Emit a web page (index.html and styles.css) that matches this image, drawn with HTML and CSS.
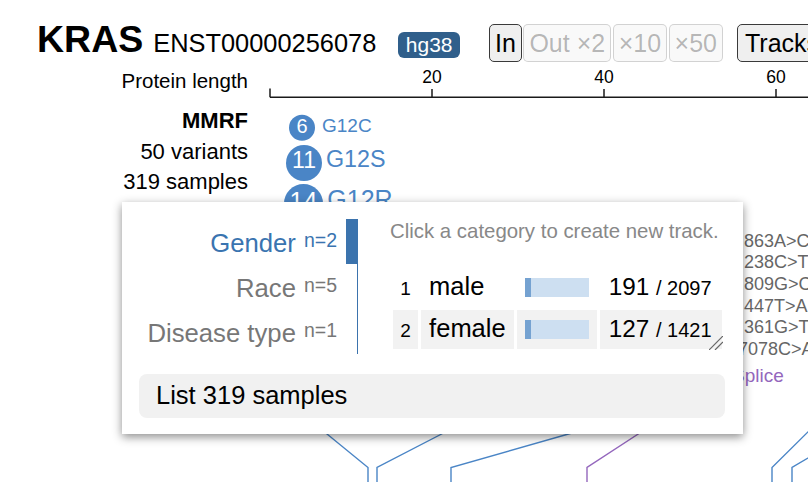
FILE: index.html
```html
<!DOCTYPE html>
<html lang="en">
<head>
<meta charset="utf-8">
<title>KRAS lollipop</title>
<link rel="stylesheet" href="styles.css">
</head>
<body>
<header class="top">
  <span class="gene">KRAS</span>
  <span class="isoform">ENST00000256078</span>
  <span class="genome">hg38</span>
  <div class="zoom">
    <button class="btn">In</button>
    <button class="btn" disabled>Out ×2</button>
    <button class="btn" disabled>×10</button>
    <button class="btn" disabled>×50</button>
  </div>
  <button class="btn tracks">Tracks</button>
</header>
<main class="track">
  <div class="labels">
    <div class="axis-label">Protein length</div>
    <div class="ds">
      <div class="ds-name">MMRF</div>
      <div>50 variants</div>
      <div>319 samples</div>
    </div>
  </div>
  <svg class="canvas" width="548" height="416" viewBox="0 0 548 416">
    <g class="axis">
      <line x1="10" y1="31.25" x2="548" y2="31.25"/>
      <line x1="10" y1="22.5" x2="10" y2="31.25"/>
      <line x1="172" y1="23" x2="172" y2="31.25"/>
      <line x1="344" y1="23" x2="344" y2="31.25"/>
      <line x1="516" y1="23" x2="516" y2="31.25"/>
      <text x="172" y="17">20</text>
      <text x="344" y="17">40</text>
      <text x="516" y="17">60</text>
    </g>
    <g class="stems">
      <polyline points="56,359 108,401.5 108,420"/>
      <polyline points="199,359 117,401.5 117,420"/>
      <polyline points="340,359 191,401.5 191,420"/>
      <polyline class="splice" points="392,359 327,401.5 327,420"/>
      <polyline points="560,354 512,401.5 512,420"/>
      <polyline points="565,382 532,401.5 532,420"/>
    </g>
    <g class="discs">
      <circle cx="42" cy="61.7" r="13"/>
      <text class="num" x="42" y="67.3" font-size="20">6</text>
      <text class="mname" x="62" y="66" font-size="19">G12C</text>
      <circle cx="44" cy="97" r="18"/>
      <text class="num" x="44" y="102.3" font-size="23">11</text>
      <text class="mname" x="66" y="100.7" font-size="23.3">G12S</text>
      <circle cx="43.5" cy="137.5" r="19.5"/>
      <text class="num" x="43.5" y="143.6" font-size="25">14</text>
      <text class="mname" x="67.3" y="142" font-size="25">G12R</text>
    </g>
    <g class="hgvs">
      <text x="484" y="180.7">863A&gt;C</text>
      <text x="484" y="202.3">238C&gt;T</text>
      <text x="484" y="224">809G&gt;C</text>
      <text x="484" y="245.7">447T&gt;A</text>
      <text x="484" y="267.3">361G&gt;T</text>
      <text x="478" y="289">7078C&gt;A</text>
      <text class="splice-label" x="472" y="315.7">Splice</text>
    </g>
  </svg>
</main>
<div class="popup">
  <div class="pop-body">
    <ul class="cats">
      <li class="cat active">Gender<span class="n">n=2</span></li>
      <li class="cat">Race<span class="n">n=5</span></li>
      <li class="cat">Disease type<span class="n">n=1</span></li>
    </ul>
    <div class="cat-detail">
      <div class="hint">Click a category to create new track.</div>
      <div class="tbl-wrap">
        <table class="vals">
          <tr>
            <td class="idx">1</td>
            <td class="name">male</td>
            <td class="barcell"><div class="bar"><div class="fill" style="width:6px"></div></div></td>
            <td class="cnt">191 <span class="tot">/ 2097</span></td>
          </tr>
          <tr>
            <td class="idx">2</td>
            <td class="name">female</td>
            <td class="barcell"><div class="bar"><div class="fill" style="width:6px"></div></div></td>
            <td class="cnt">127 <span class="tot">/ 1421</span></td>
          </tr>
        </table>
        <svg class="grip" width="14" height="14" viewBox="0 0 14 14">
          <line x1="0" y1="14" x2="14" y2="0"/>
          <line x1="6" y1="14" x2="14" y2="6"/>
        </svg>
      </div>
    </div>
  </div>
  <button class="list">List 319 samples</button>
</div>
</body>
</html>
```

FILE: styles.css
```css
html, body {
  margin: 0;
  padding: 0;
}
body {
  width: 808px;
  height: 482px;
  overflow: hidden;
  position: relative;
  background: #fff;
  color: #000;
  font-family: "Liberation Sans", Arial, sans-serif;
}

/* header */
.top {
  display: flex;
  align-items: baseline;
  flex-wrap: nowrap;
  height: 66px;
  box-sizing: border-box;
  padding: 17.5px 0 0 37px;
  white-space: nowrap;
}
.top > * {
  flex-shrink: 0;
}
.gene {
  font-size: 37.5px;
  font-weight: bold;
}
.isoform {
  font-size: 25.4px;
  margin-left: 10px;
}
.genome {
  margin-left: 22px;
  font-size: 21px;
  line-height: 26px;
  padding: 0 7.5px;
  background: #305f8b;
  color: #fff;
  border-radius: 6px;
}
.zoom {
  display: flex;
  align-items: baseline;
  gap: 1.5px;
  margin-left: 29px;
}
.btn {
  font-family: "Liberation Sans", Arial, sans-serif;
  font-size: 25px;
  height: 38px;
  padding: 0 5px;
  border: 1px solid #3a3a3a;
  border-radius: 5px;
  background: #efefef;
  color: #000;
  white-space: nowrap;
}
.btn:disabled {
  border-color: rgba(118, 118, 118, 0.3);
  background: rgba(239, 239, 239, 0.35);
  color: rgba(16, 16, 16, 0.3);
}
.tracks {
  margin-left: 14px;
  padding: 0 7px;
}

/* track area */
.track {
  display: flex;
  align-items: flex-start;
}
.labels {
  width: 248px;
  flex-shrink: 0;
  text-align: right;
}
.axis-label {
  font-size: 20.5px;
  line-height: 30px;
}
.ds {
  margin-top: 10px;
  font-size: 22px;
  line-height: 30.5px;
}
.ds-name {
  font-weight: bold;
}
.canvas {
  display: block;
  flex-shrink: 0;
  margin-left: 12px;
  overflow: hidden;
  font-family: "Liberation Sans", Arial, sans-serif;
}
.axis line {
  stroke: #1a1a1a;
  stroke-width: 1.5;
}
.axis text {
  font-size: 17.5px;
  text-anchor: middle;
  fill: #000;
}
.stems polyline {
  fill: none;
  stroke: #4a85c6;
  stroke-width: 1.4;
}
.stems .splice {
  stroke: #9467bd;
}
.discs circle {
  fill: #4a85c6;
}
.discs .num {
  fill: #fff;
  text-anchor: middle;
}
.discs .mname {
  fill: #4a85c6;
}
.hgvs text {
  font-size: 18px;
  fill: #666;
}
.hgvs .splice-label {
  font-size: 19px;
  fill: #9467bd;
}

/* popup menu */
.popup {
  position: absolute;
  left: 122px;
  top: 202px;
  width: 621px;
  box-sizing: border-box;
  padding: 17px 18px 16px 17px;
  background: #fff;
  box-shadow: 0 3px 9px rgba(0, 0, 0, 0.45);
}
.pop-body {
  display: flex;
  align-items: flex-start;
}
.cats {
  list-style: none;
  margin: 0;
  padding: 0;
  width: 219px;
  flex-shrink: 0;
}
.cat {
  height: 45px;
  line-height: 43px;
  font-size: 25.7px;
  text-align: right;
  color: #777;
  padding-right: 20px;
  border-right: 1px solid #3b73ad;
  white-space: nowrap;
}
.cat.active {
  color: #3a74b0;
  padding-right: 9px;
  border-right: 12px solid #3b73ad;
}
.n {
  font-size: 19.5px;
  margin-left: 8px;
  vertical-align: 5px;
}
.cat-detail {
  margin-left: 32px;
  display: flex;
  flex-direction: column;
  align-items: flex-start;
}
.hint {
  font-size: 20.4px;
  line-height: 24px;
  color: #888;
  white-space: nowrap;
}
.tbl-wrap {
  position: relative;
  margin-top: 22px;
}
.vals {
  border-collapse: separate;
  border-spacing: 3px;
  font-size: 25.5px;
}
.vals tr {
  height: 39px;
}
.vals tr:nth-child(even) td {
  background: #f2f2f2;
}
.vals td {
  padding: 4px 0 0 0;
  vertical-align: baseline;
  white-space: nowrap;
  box-sizing: border-box;
  height: 39px;
}
.vals .idx {
  width: 26px;
  text-align: center;
  font-size: 19px;
}
.vals .name {
  width: 93px;
  padding-left: 8px;
}
.vals .barcell {
  width: 80px;
  padding: 0 8px;
  vertical-align: middle;
}
.bar {
  width: 64px;
  height: 19px;
  background: #cddff1;
}
.fill {
  height: 19px;
  background: #75a2d1;
}
.vals .cnt {
  width: 123px;
  padding-left: 9px;
  font-size: 24.3px;
}
.tot {
  font-size: 20px;
}
.grip {
  position: absolute;
  right: 2px;
  bottom: 2px;
}
.grip line {
  stroke: #666;
  stroke-width: 1.2;
}
.list {
  display: block;
  width: 100%;
  height: 44px;
  margin-top: 20px;
  padding: 0 17px 2px;
  border: none;
  border-radius: 8px;
  background: #f1f1f1;
  color: #000;
  font-family: "Liberation Sans", Arial, sans-serif;
  font-size: 25.5px;
  text-align: left;
}
```
